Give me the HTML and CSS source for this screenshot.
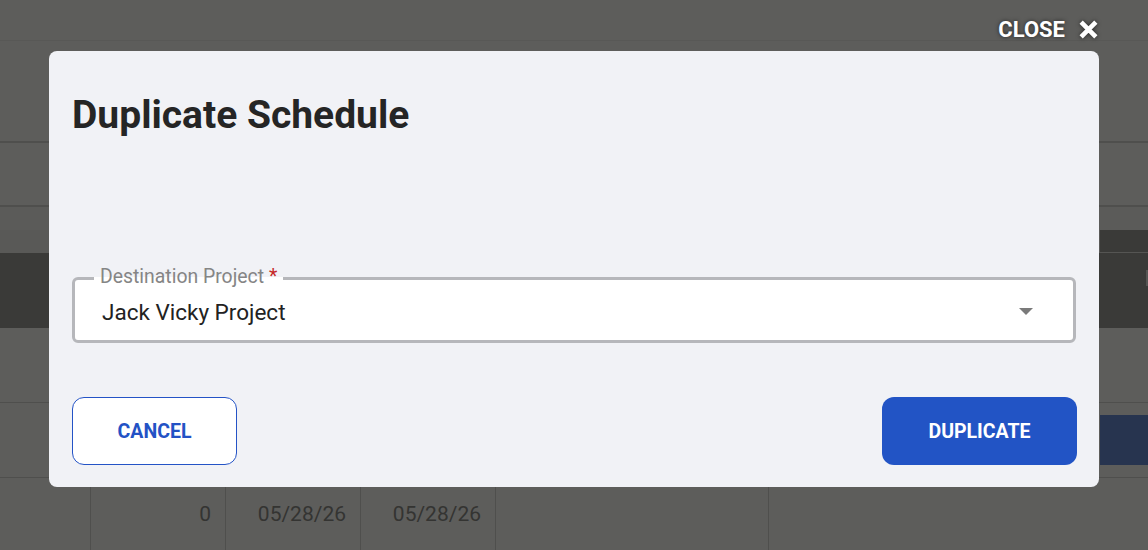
FILE: index.html
```html
<!DOCTYPE html>
<html>
<head>
<meta charset="utf-8">
<link rel="stylesheet" href="styles.css">
</head>
<body>
<div class="page">
  <div class="topbar"></div>
  <div class="band band-a"></div>
  <div class="band band-b"></div>
  <div class="band band-c"></div>
  <div class="band band-d"><div class="d-right"></div></div>
  <div class="thead"><span class="thead-mark"></span></div>
  <div class="trow"></div>
  <div class="trow"><span class="row-btn"></span></div>
  <div class="trow cells">
    <div class="cell w90"></div>
    <div class="cell w135">0</div>
    <div class="cell w135">05/28/26</div>
    <div class="cell w135">05/28/26</div>
    <div class="cell w273"></div>
    <div class="cell grow"></div>
  </div>
</div>

<div class="overlay">
  <button class="close">CLOSE
    <svg class="close-x" viewBox="0 0 20 20" width="21" height="21"><path d="M3 3 L17 17 M17 3 L3 17" stroke="#fff" stroke-width="4.4" stroke-linecap="butt"/></svg>
  </button>
  <div class="modal">
    <h1 class="title">Duplicate Schedule</h1>
    <div class="field">
      <span class="legend">Destination Project <span class="req">*</span></span>
      <span class="value">Jack Vicky Project</span>
      <svg class="caret" viewBox="0 0 14 7" width="14" height="7"><path d="M0 0 L14 0 L7 7 Z" fill="#7a7a7a"/></svg>
    </div>
    <div class="actions">
      <button class="btn btn-outline">CANCEL</button>
      <button class="btn btn-solid">DUPLICATE</button>
    </div>
  </div>
</div>
</body>
</html>
```

FILE: styles.css
```css
* { box-sizing: border-box; }
html, body { margin: 0; padding: 0; }
body {
  width: 1148px;
  height: 550px;
  overflow: hidden;
  background: #5d5d5b;
  font-family: Roboto, "Liberation Sans", sans-serif;
  position: relative;
}
.page { display: flex; flex-direction: column; }
.topbar { height: 41px; border-bottom: 1px solid #585856; }
.band-a { height: 102px; border-bottom: 2px solid #4f4f4d; }
.band-b { height: 64px; border-bottom: 2px solid #4f4f4d; }
.band-c { height: 23px; background: #5b5b59; }
.band-d { height: 23px; background: #595957; display: flex; justify-content: flex-end; }
.d-right { width: 48px; background: #3a3a38; border-bottom: 1px solid #555553; }
.thead { height: 75px; background: #3a3a38; position: relative; }
.thead-mark { position: absolute; right: 0; top: 17px; width: 2px; height: 16px; background: #555553; }
.trow { height: 75px; border-bottom: 1px solid #4f4f4d; position: relative; display: flex; justify-content: flex-end; align-items: center; }
.row-btn { width: 48px; height: 50px; background: #27344f; }
.cells { border-bottom: none; justify-content: flex-start; align-items: stretch; height: 73px; }
.cell {
  border-right: 1px solid #4f4f4d;
  color: #343432;
  font-size: 21px;
  display: flex;
  align-items: center;
  justify-content: flex-end;
  padding: 0 14px 2px 0;
}
.w90 { width: 91px; }
.w135 { width: 135px; }
.w273 { width: 273px; }
.grow { flex: 1; border-right: none; }

.overlay { position: absolute; inset: 0; }
.close {
  position: absolute;
  top: 17px;
  right: 49px;
  display: flex;
  align-items: center;
  gap: 13px;
  background: none;
  border: none;
  padding: 0;
  color: #fff;
  font-family: Roboto, "Liberation Sans", sans-serif;
  font-weight: 700;
  font-size: 22px;
  text-shadow: 0 0 4px rgba(0,0,0,0.6);
}
.close-x { filter: drop-shadow(0 0 2px rgba(0,0,0,0.6)); }
.modal {
  position: absolute;
  left: 49px;
  top: 51px;
  width: 1050px;
  height: 436px;
  background: #f1f2f6;
  border-radius: 8px;
  padding: 0 23px;
  display: flex;
  flex-direction: column;
}
.title {
  margin: 40px 0 0 0;
  font-size: 39px;
  font-weight: 700;
  color: #252525;
  line-height: 48px;
}
.field {
  margin-top: 138px;
  height: 66px;
  border: 3px solid #b6b7bb;
  border-radius: 6px;
  background: #fff;
  position: relative;
  display: flex;
  align-items: center;
  padding: 0 40px 0 27px;
}
.legend {
  position: absolute;
  top: -14px;
  left: 19px;
  padding: 0 6px;
  background: linear-gradient(#f1f2f6 50%, #fff 50%);
  color: #858585;
  font-size: 19.4px;
  line-height: 22px;
}
.req { color: #c62828; }
.value { font-size: 22.5px; color: #222; flex: 1; margin-top: 4px; }
.caret { margin-top: 2px; }
.actions {
  margin-top: 54px;
  display: flex;
  justify-content: space-between;
}
.btn {
  height: 68px;
  border-radius: 12px;
  font-family: Roboto, "Liberation Sans", sans-serif;
  font-weight: 700;
  font-size: 19.5px;
}
.btn-outline { width: 165px; background: #fff; border: 1px solid #2453c6; color: #2352c5; }
.btn-solid { width: 195px; background: #2254c5; border: none; color: #fff; margin-right: -1px; }
```
